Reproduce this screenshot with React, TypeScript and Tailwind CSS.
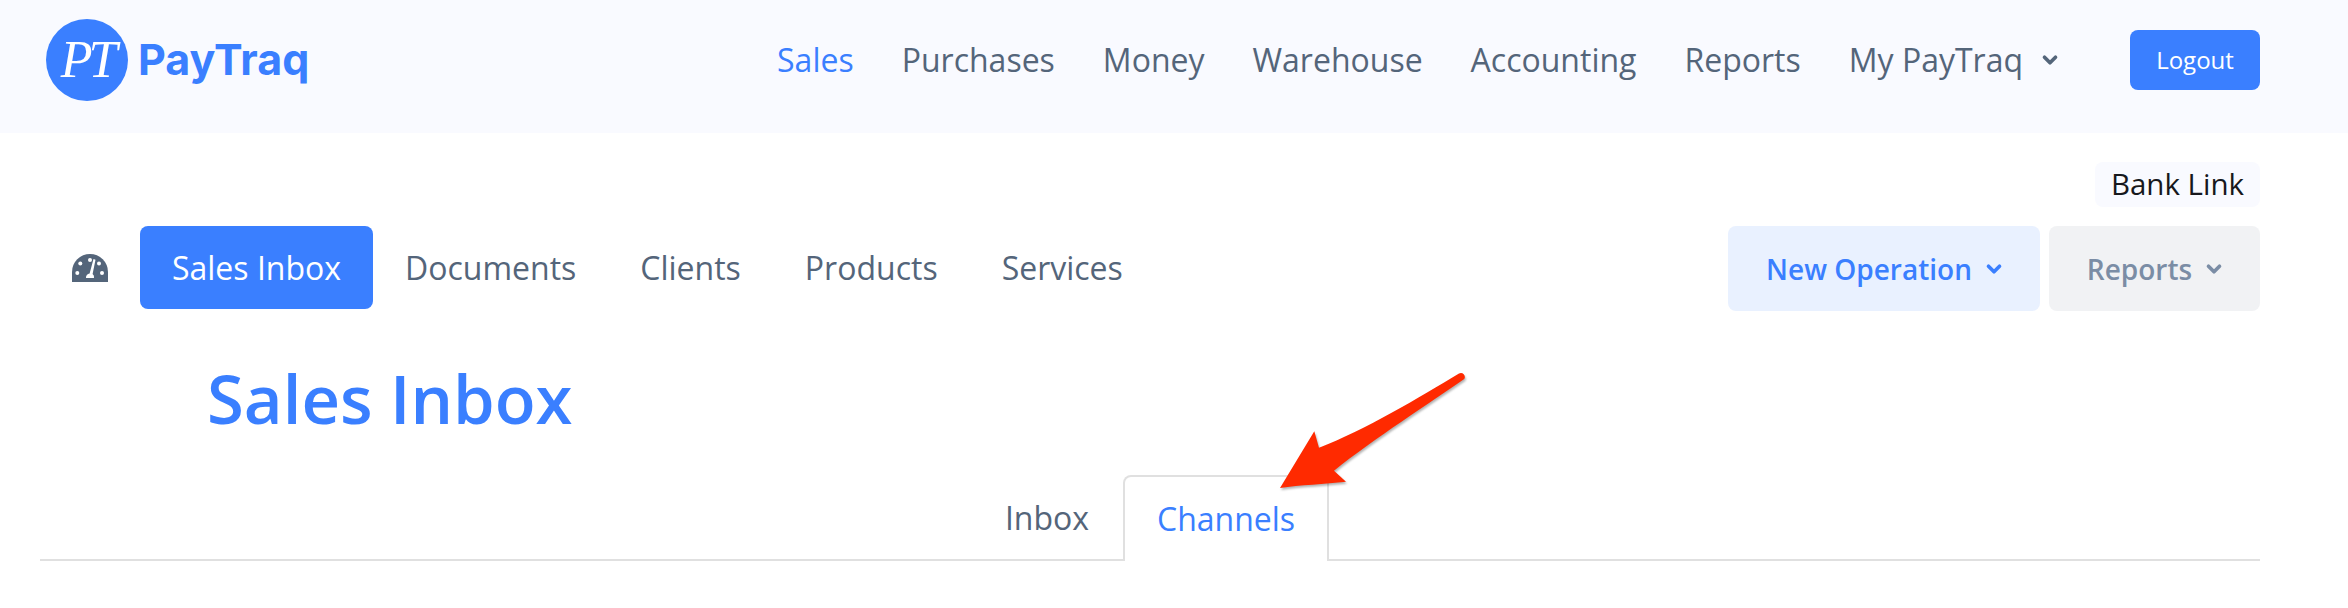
import { ChevronDown } from "lucide-react"

const topNav = ["Purchases", "Money", "Warehouse", "Accounting", "Reports"]
const subNav = ["Documents", "Clients", "Products", "Services"]

const GaugeIcon = () => (
  <svg width="36" height="28" viewBox="0 0 36 28" className="text-[#54657a]">
    <path d="M0 28 V18 A18 18 0 0 1 36 18 V28 Z" fill="currentColor" />
    <g fill="#fff">
      <circle cx="18" cy="6" r="2" />
      <circle cx="8.3" cy="9.5" r="2" />
      <circle cx="5.3" cy="19" r="2" />
      <circle cx="30" cy="19" r="2" />
      <circle cx="27" cy="9.5" r="2" />
      <path d="M21.5 5 L23.5 5.8 L20.6 20 A4 4 0 0 1 22 24 H14 A4 4 0 0 1 17.6 19.5 Z" />
    </g>
  </svg>
)

const Arrow = () => (
  <svg
    width="220"
    height="150"
    viewBox="0 0 220 150"
    className="absolute left-[1270px] top-[360px] drop-shadow-[1px_2px_1px_rgba(0,0,0,0.3)]"
  >
    <path
      d="M10 128 L44.3 71.3 L49 87.7 C95 70 150 37 189 13.5 C193 11 197 17 193.5 19.5 C160 43 105 78 64 110.7 L76 121.7 C55 124 30 125 10 128 Z"
      fill="#ff2a00"
    />
  </svg>
)

export default function App() {
  return (
    <div className="relative min-h-[608px] w-full bg-white font-['Open_Sans',sans-serif] text-[32px] text-[#54657a]">
      <header className="flex h-[133px] items-center justify-between bg-[#f9faff] pb-[13px] pl-[46px] pr-[88px]">
        <div className="flex items-center gap-[10px]">
          <div className="flex h-[82px] w-[82px] items-center justify-center rounded-full bg-[#3a7fff] font-['Liberation_Serif',serif] text-[52px] italic tracking-[-4px] text-white">
            PT
          </div>
          <span className="-mt-[2px] font-['Inter',sans-serif] text-[43px] font-bold leading-none text-[#3a7fff]">
            PayTraq
          </span>
        </div>
        <nav className="flex items-center">
          <a className="mr-[48px] text-[#3a7fff]">Sales</a>
          {topNav.map((item) => (
            <a key={item} className="mr-[48px]">
              {item}
            </a>
          ))}
          <a className="flex items-center gap-[16px]">
            My PayTraq
            <ChevronDown size={22} strokeWidth={4} />
          </a>
          <button className="ml-[69px] h-[60px] w-[130px] rounded-[8px] bg-[#3a7fff] text-[24px] font-medium text-white">
            Logout
          </button>
        </nav>
      </header>

      <div className="pl-[40px] pr-[88px]">
        <div className="mt-[29px] flex justify-end">
          <span className="flex h-[45px] w-[165px] items-center justify-center rounded-[8px] bg-[#f9faff] text-[29.5px] font-medium text-[#17181c]">
            Bank Link
          </span>
        </div>

        <div className="mt-[19px] flex items-start justify-between">
          <div className="flex items-center">
            <div className="ml-[32px] flex w-[68px]">
              <GaugeIcon />
            </div>
            <a className="flex h-[83px] w-[233px] items-center justify-center rounded-[8px] bg-[#3a7fff] text-white">
              Sales Inbox
            </a>
            {subNav.map((item) => (
              <a key={item} className="ml-[32px] mr-[32px]">
                {item}
              </a>
            ))}
          </div>
          <div className="flex gap-[9px] text-[28px] font-semibold">
            <button className="flex h-[85px] w-[312px] items-center justify-center gap-[11px] rounded-[8px] bg-[#e9f1ff] pl-[3px] text-[#3a7fff]">
              New Operation
              <ChevronDown size={22} strokeWidth={4} />
            </button>
            <button className="flex h-[85px] w-[211px] items-center justify-center gap-[11px] rounded-[8px] bg-[#f1f2f4] pl-[3px] text-[#7b8da5]">
              Reports
              <ChevronDown size={22} strokeWidth={4} />
            </button>
          </div>
        </div>

        <h1 className="ml-[167px] mt-[42px] text-[67px] font-semibold leading-[90px] text-[#3a7fff]">
          Sales Inbox
        </h1>

        <div className="mt-[32px] flex h-[86px] justify-center border-b-2 border-[#e0e0e0]">
          <a className="flex h-[86px] items-center px-[34px]">Inbox</a>
          <a className="-mb-[2px] flex h-[86px] w-[206px] items-center justify-center rounded-t-[8px] border-2 border-b-0 border-[#e0e0e0] bg-white text-[#3a7fff]">
            Channels
          </a>
        </div>
      </div>

      <Arrow />
    </div>
  )
}
